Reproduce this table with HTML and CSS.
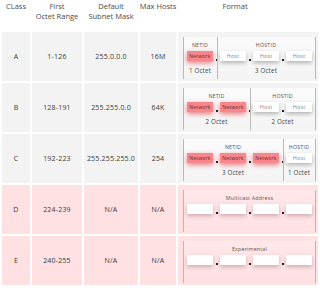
FILE: index.html
```html
<!DOCTYPE html>
<html>
<head>
<meta charset="utf-8">
<link rel="stylesheet" href="styles.css">
</head>
<body>
<div class="table">
  <div class="hd"><span>CLass</span></div>
  <div class="hd"><span>First</span><span>Octet Range</span></div>
  <div class="hd"><span>Default</span><span>Subnet Mask</span></div>
  <div class="hd"><span>Max Hosts</span></div>
  <div class="hd hd-format"><span>Format</span></div>

  <div class="cell grey">A</div>
  <div class="cell grey">1-126</div>
  <div class="cell grey">255.0.0.0</div>
  <div class="cell grey">16M</div>
  <div class="cell grey fmt">
    <div class="fbox">
      <div class="lbl" style="grid-column:1/2">NETID</div>
      <div class="lbl" style="grid-column:3/8">HOSTID</div>
      <div class="net c1">Network</div>
      <div class="host c3">Host</div>
      <div class="host c5">Host</div>
      <div class="host c7">Host</div>
      <div class="dot s2"></div><div class="dot s4"></div><div class="dot s6"></div>
      <div class="div s2"></div>
      <div class="oct" style="grid-column:1/2">1 Octet</div>
      <div class="oct" style="grid-column:3/8">3 Octet</div>
    </div>
  </div>

  <div class="cell grey">B</div>
  <div class="cell grey">128-191</div>
  <div class="cell grey">255.255.0.0</div>
  <div class="cell grey">64K</div>
  <div class="cell grey fmt">
    <div class="fbox">
      <div class="lbl" style="grid-column:1/4">NETID</div>
      <div class="lbl" style="grid-column:5/8">HOSTID</div>
      <div class="net c1">Network</div>
      <div class="net c3">Network</div>
      <div class="host c5">Host</div>
      <div class="host c7">Host</div>
      <div class="dot s2"></div><div class="dot s4"></div><div class="dot s6"></div>
      <div class="div s4"></div>
      <div class="oct" style="grid-column:1/4">2 Octet</div>
      <div class="oct" style="grid-column:5/8">2 Octet</div>
    </div>
  </div>

  <div class="cell grey">C</div>
  <div class="cell grey">192-223</div>
  <div class="cell grey">255.255.255.0</div>
  <div class="cell grey">254</div>
  <div class="cell grey fmt">
    <div class="fbox">
      <div class="lbl" style="grid-column:1/6">NETID</div>
      <div class="lbl" style="grid-column:7/8">HOSTID</div>
      <div class="net c1">Network</div>
      <div class="net c3">Network</div>
      <div class="net c5">Network</div>
      <div class="host c7">Host</div>
      <div class="dot s2"></div><div class="dot s4"></div><div class="dot s6"></div>
      <div class="div s6"></div>
      <div class="oct" style="grid-column:1/6">3 Octet</div>
      <div class="oct" style="grid-column:7/8">1 Octet</div>
    </div>
  </div>

  <div class="cell pink">D</div>
  <div class="cell pink">224-239</div>
  <div class="cell pink">N/A</div>
  <div class="cell pink">N/A</div>
  <div class="cell pink fmt">
    <div class="fbox">
      <div class="lbl" style="grid-column:1/8">Multicast Address</div>
      <div class="empty c1"></div>
      <div class="empty c3"></div>
      <div class="empty c5"></div>
      <div class="empty c7"></div>
      <div class="dot s2"></div><div class="dot s4"></div><div class="dot s6"></div>
    </div>
  </div>

  <div class="cell pink">E</div>
  <div class="cell pink">240-255</div>
  <div class="cell pink">N/A</div>
  <div class="cell pink">N/A</div>
  <div class="cell pink fmt">
    <div class="fbox">
      <div class="lbl" style="grid-column:1/8">Experimental</div>
      <div class="empty c1"></div>
      <div class="empty c3"></div>
      <div class="empty c5"></div>
      <div class="empty c7"></div>
      <div class="dot s2"></div><div class="dot s4"></div><div class="dot s6"></div>
    </div>
  </div>
</div>
</body>
</html>
```

FILE: styles.css
```css
* { box-sizing: border-box; }
html, body { margin: 0; padding: 0; background: #fff; }
body {
  width: 320px;
  height: 291px;
  overflow: hidden;
  font-family: "Open Sans", "DejaVu Sans", sans-serif;
  color: #3a3a3a;
}
.table {
  display: grid;
  grid-template-columns: 28px 50px 54px 36px 140px;
  grid-template-rows: 30px repeat(5, 49px);
  column-gap: 2px;
  row-gap: 2px;
  padding-left: 2px;
}
.hd {
  display: flex;
  flex-direction: column;
  align-items: center;
  font-size: 7.5px;
  line-height: 10px;
  white-space: nowrap;
  padding-top: 1px;
  color: #4a4a4a;
}
.hd-format { padding-right: 26px; }
.cell {
  font-size: 7px;
  display: flex;
  align-items: center;
  justify-content: center;
  color: #3a3a3a;
  letter-spacing: 0.2px;
  white-space: nowrap;
}
.grey { background: #f3f3f3; }
.pink { background: #ffe0e3; }
.fmt {
  display: block;
  padding: 5px 2px 2px 5px;
}
.fbox {
  height: 42px;
  border-left: 1px solid #b9b9b9;
  border-right: 1px solid #b9b9b9;
  padding: 0 3px;
  display: grid;
  grid-template-columns: 26px 7px 26px 7px 26px 7px 26px;
  grid-template-rows: 14px 10px 18px;
}
.grey .fbox { background: linear-gradient(#fbfbfb, #f4f4f4); }
.pink .fbox { border-color: #c7b3b6; background: linear-gradient(#ffe7ea, #ffe1e4); }
.lbl {
  grid-row: 1;
  font-size: 5.3px;
  line-height: 6px;
  text-align: center;
  align-self: center;
  color: #555;
  margin-top: 1px;
  white-space: nowrap;
}
.oct {
  grid-row: 3;
  font-size: 6.2px;
  line-height: 8px;
  text-align: center;
  align-self: center;
  color: #444;
  margin-top: 1px;
  white-space: nowrap;
}
.net, .host, .empty {
  grid-row: 2;
  font-size: 5.5px;
  display: flex;
  align-items: center;
  justify-content: center;
  white-space: nowrap;
  overflow: visible;
}
.net {
  background: #f6878d;
  color: #6b2428;
  font-size: 5px;
  box-shadow: 0 2px 5px rgba(225, 70, 80, 0.7);
}
.host {
  background: #fff;
  color: #888;
  box-shadow: 0 2px 4px rgba(0, 0, 0, 0.28);
}
.empty {
  background: #fff;
  box-shadow: 0 2px 4px rgba(90, 40, 45, 0.3);
}
.c1 { grid-column: 1; }
.c3 { grid-column: 3; }
.c5 { grid-column: 5; }
.c7 { grid-column: 7; }
.dot {
  grid-row: 2;
  width: 2px;
  height: 2px;
  background: #222;
  justify-self: center;
  align-self: end;
}
.s2 { grid-column: 2; }
.s4 { grid-column: 4; }
.s6 { grid-column: 6; }
.div {
  grid-row: 1 / 4;
  border-left: 1px solid #b9b9b9;
  margin-left: 4px;
}
```
